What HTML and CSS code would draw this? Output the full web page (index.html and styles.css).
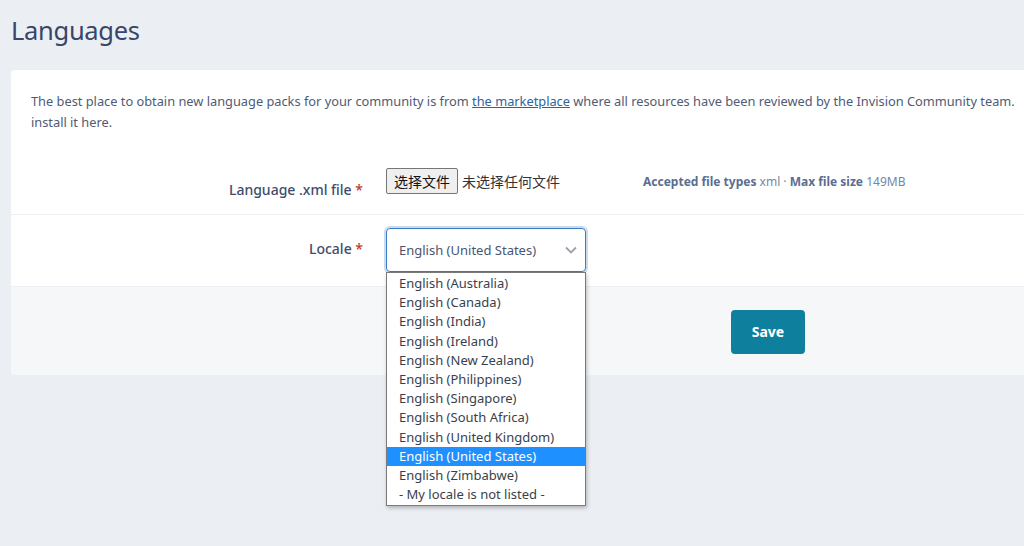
FILE: index.html
```html
<!DOCTYPE html>
<html lang="en">
<head>
<meta charset="utf-8">
<title>Languages</title>
<link rel="stylesheet" href="styles.css">
</head>
<body>
<h1 class="page-title">Languages</h1>
<div class="card">
  <p class="intro">The best place to obtain new language packs for your community is from <a href="#" class="link">the marketplace</a> where all resources have been reviewed by the Invision Community team.<br>install it here.</p>
  <div class="form-row row-file">
    <div class="label">Language .xml file <span class="req">*</span></div>
    <div class="field">
      <span class="file-input"><span class="file-btn">选择文件</span><span class="file-none">未选择任何文件</span></span>
      <span class="file-info"><b>Accepted file types</b> xml · <b>Max file size</b> 149MB</span>
    </div>
  </div>
  <div class="form-row row-locale">
    <div class="label">Locale <span class="req">*</span></div>
    <div class="field">
      <div class="select-wrap">
        <div class="select">
          <span>English (United States)</span>
          <svg class="chev" width="12" height="8" viewBox="0 0 12 8"><path d="M1 1.5l5 5 5-5" fill="none" stroke="#9aa0a8" stroke-width="1.8"/></svg>
        </div>
        <ul class="dropdown">
          <li>English (Australia)</li>
          <li>English (Canada)</li>
          <li>English (India)</li>
          <li>English (Ireland)</li>
          <li>English (New Zealand)</li>
          <li>English (Philippines)</li>
          <li>English (Singapore)</li>
          <li>English (South Africa)</li>
          <li>English (United Kingdom)</li>
          <li class="sel">English (United States)</li>
          <li>English (Zimbabwe)</li>
          <li>- My locale is not listed -</li>
        </ul>
      </div>
    </div>
  </div>
  <div class="footer">
    <button class="save">Save</button>
  </div>
</div>
</body>
</html>
```
FILE: styles.css
```css
html, body { margin: 0; padding: 0; }
html { overflow: hidden; }
body {
  background: #ebeef3;
  font-family: "Noto Sans", "Open Sans", sans-serif;
  color: #4b5873;
  width: 1024px;
  height: 546px;
  overflow: hidden;
}
.page-title {
  margin: 0;
  padding: 13px 0 0 11px;
  height: 70px;
  box-sizing: border-box;
  font-size: 25.5px;
  font-weight: 400;
  color: #37466a;
  letter-spacing: -0.3px;
  line-height: 34px;
}
.card {
  margin-left: 11px;
  width: 1514px;
  background: #fff;
  border-radius: 4px;
}
.intro {
  margin: 0;
  padding: 21px 20px 0 20px;
  font-size: 12.8px;
  line-height: 21px;
  color: #4f5b74;
}
.link { color: #2a659c; text-decoration: underline; }
.form-row {
  display: flex;
  align-items: flex-start;
  border-bottom: 1px solid #ebeef2;
}
.row-file { margin-top: 19px; padding: 16px 0 15px; }
.row-locale { padding: 13px 0 14px; }
.label {
  width: 352px;
  text-align: right;
  font-size: 14px;
  font-weight: 500;
  color: #3f4c6c;
  flex-shrink: 0;
}
.row-file .label { padding-top: 12px; }
.row-locale .label { padding-top: 11px; }
.req { color: #c0392b; }
.field { margin-left: 23px; display: flex; align-items: center; }
.file-input { display: flex; align-items: center; width: 257px; }
.file-btn {
  font-family: "Noto Sans CJK SC", sans-serif;
  font-size: 14px;
  color: #111;
  background: #efefef;
  border: 1px solid #767676;
  border-radius: 2px;
  padding: 0 7px;
  height: 26px;
  box-sizing: border-box;
  line-height: 24px;
}
.file-none {
  font-family: "Noto Sans CJK SC", sans-serif;
  font-size: 14px;
  color: #333;
  margin-left: 4px;
}
.file-info { font-size: 12px; color: #7487a6; }
.file-info b { color: #5a6e92; font-weight: 700; }
.select-wrap { position: relative; }
.select {
  width: 200px;
  height: 44px;
  box-sizing: border-box;
  border: 1px solid #3b7dc2;
  border-radius: 4px;
  box-shadow: 0 0 0 2px #c9dcef;
  display: flex;
  align-items: center;
  justify-content: space-between;
  padding: 0 8px 0 12px;
  font-size: 13px;
  color: #4a5570;
}
.dropdown {
  position: absolute;
  left: 0;
  top: 44px;
  width: 200px;
  box-sizing: border-box;
  margin: 0;
  padding: 1px 0;
  list-style: none;
  background: #fff;
  border: 1px solid #7a7a7a;
  box-shadow: 1px 2px 4px rgba(0,0,0,0.25);
  z-index: 5;
}
.dropdown li {
  height: 19.2px;
  line-height: 19px;
  padding-left: 12px;
  font-size: 13px;
  color: #3a3f4d;
}
.dropdown li.sel { background: #1e90ff; color: #fff; }
.footer {
  background: #f6f7f9;
  height: 88px;
  display: flex;
  justify-content: center;
  align-items: center;
  border-radius: 0 0 4px 4px;
}
.save {
  width: 74px;
  height: 44px;
  background: #0e809d;
  color: #fff;
  border: 0;
  border-radius: 4px;
  font-family: "Noto Sans", sans-serif;
  font-size: 14px;
  font-weight: 700;
  margin-top: 1px;
}
```
